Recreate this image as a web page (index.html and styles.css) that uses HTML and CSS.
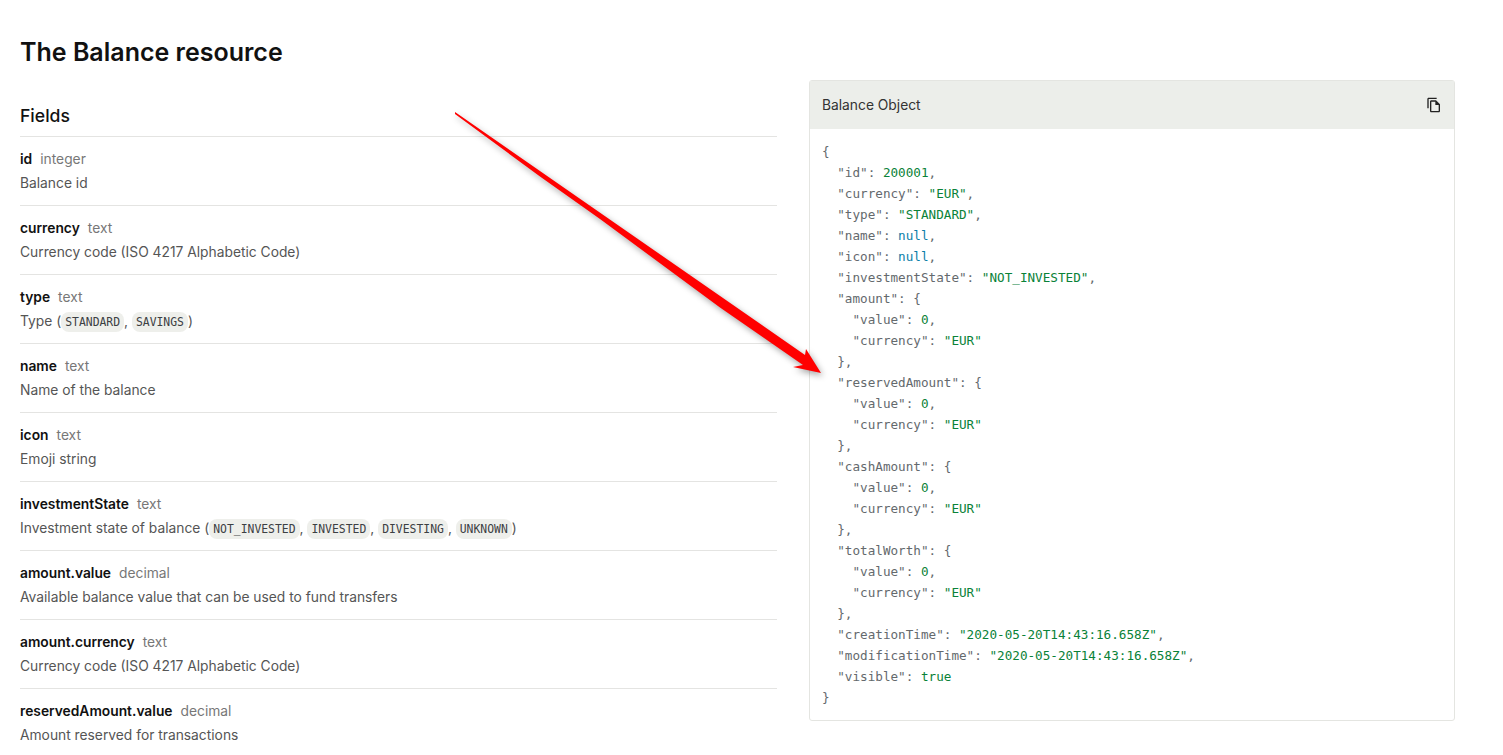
FILE: index.html
```html
<!DOCTYPE html>
<html lang="en">
<head>
    <meta charset="UTF-8">
    <meta name="viewport" content="width=device-width, initial-scale=1.0">
    <title>The Balance resource</title>
    <link rel="stylesheet" href="styles.css">
</head>
<body>
    <div class="page">
        <h1 class="page-title">The Balance resource</h1>
        <div class="columns">
            <div class="fields">
                <h2 class="fields-title">Fields</h2>
                <div class="field">
                    <p class="field-head"><strong>id</strong><span class="field-type">integer</span></p>
                    <p class="field-desc">Balance id</p>
                </div>
                <div class="field">
                    <p class="field-head"><strong>currency</strong><span class="field-type">text</span></p>
                    <p class="field-desc">Currency code (ISO 4217 Alphabetic Code)</p>
                </div>
                <div class="field">
                    <p class="field-head"><strong>type</strong><span class="field-type">text</span></p>
                    <p class="field-desc">Type (<code>STANDARD</code>, <code>SAVINGS</code>)</p>
                </div>
                <div class="field">
                    <p class="field-head"><strong>name</strong><span class="field-type">text</span></p>
                    <p class="field-desc">Name of the balance</p>
                </div>
                <div class="field">
                    <p class="field-head"><strong>icon</strong><span class="field-type">text</span></p>
                    <p class="field-desc">Emoji string</p>
                </div>
                <div class="field">
                    <p class="field-head"><strong>investmentState</strong><span class="field-type">text</span></p>
                    <p class="field-desc">Investment state of balance (<code>NOT_INVESTED</code>, <code>INVESTED</code>, <code>DIVESTING</code>, <code>UNKNOWN</code>)</p>
                </div>
                <div class="field">
                    <p class="field-head"><strong>amount.value</strong><span class="field-type">decimal</span></p>
                    <p class="field-desc">Available balance value that can be used to fund transfers</p>
                </div>
                <div class="field">
                    <p class="field-head"><strong>amount.currency</strong><span class="field-type">text</span></p>
                    <p class="field-desc">Currency code (ISO 4217 Alphabetic Code)</p>
                </div>
                <div class="field">
                    <p class="field-head"><strong>reservedAmount.value</strong><span class="field-type">decimal</span></p>
                    <p class="field-desc">Amount reserved for transactions</p>
                </div>
            </div>
            <div class="code-card">
                <div class="code-header">
                    <span>Balance Object</span>
                    <svg class="copy-icon" viewBox="0 0 24 24" width="16" height="16">
                        <path d="M16 1H4c-1.1 0-2 .9-2 2v14h2V3h12V1zm-1 4H8c-1.1 0-1.99.9-1.99 2L6 21c0 1.1.89 2 1.99 2H19c1.1 0 2-.9 2-2V11l-6-6zM8 21V7h6v5h5v9H8z"/>
                    </svg>
                </div>
<pre class="code-body">{
  "id": <span class="str">200001</span>,
  "currency": <span class="str">"EUR"</span>,
  "type": <span class="str">"STANDARD"</span>,
  "name": <span class="kw">null</span>,
  "icon": <span class="kw">null</span>,
  "investmentState": <span class="str">"NOT_INVESTED"</span>,
  "amount": {
    "value": <span class="str">0</span>,
    "currency": <span class="str">"EUR"</span>
  },
  "reservedAmount": {
    "value": <span class="str">0</span>,
    "currency": <span class="str">"EUR"</span>
  },
  "cashAmount": {
    "value": <span class="str">0</span>,
    "currency": <span class="str">"EUR"</span>
  },
  "totalWorth": {
    "value": <span class="str">0</span>,
    "currency": <span class="str">"EUR"</span>
  },
  "creationTime": <span class="str">"2020-05-20T14:43:16.658Z"</span>,
  "modificationTime": <span class="str">"2020-05-20T14:43:16.658Z"</span>,
  "visible": <span class="str">true</span>
}</pre>
            </div>
        </div>
    </div>
    <svg class="arrow" viewBox="0 0 1503 755" width="1503" height="755">
        <polygon points="455,112 805,355 806,349 821,373 793,367 803,365 720,307.5 600,219 540,176.5 455,114"/>
    </svg>
</body>
</html>
```

FILE: styles.css
```css
* {
    margin: 0;
    padding: 0;
    box-sizing: border-box;
}
html, body {
    height: 755px;
    overflow: hidden;
}
body {
    background: #fff;
    color: #555;
    font-family: Inter, "Liberation Sans", sans-serif;
    font-size: 13.8px;
    line-height: 24px;
    position: relative;
}
.page {
    padding: 36px 48px 0 20px;
}
.page-title {
    color: #111;
    font-size: 25px;
    font-weight: 600;
    line-height: 32px;
}
.columns {
    display: flex;
    align-items: flex-start;
    gap: 32px;
    margin-top: 12px;
}
.fields {
    width: 757px;
    flex-shrink: 0;
}
.fields-title {
    color: #111;
    font-size: 17.6px;
    font-weight: 500;
    line-height: 24px;
    margin-top: 24px;
    padding-bottom: 8px;
}
.field {
    border-top: 1px solid #e4e4e2;
    height: 69px;
    padding-top: 10px;
}
.field-head strong {
    color: #111;
    font-weight: 600;
}
.field-type {
    color: #777;
    margin-left: 8px;
}
code {
    background: #eeefeb;
    border-radius: 8px;
    color: #3c4043;
    font-family: "DejaVu Sans Mono", monospace;
    font-size: 11.4px;
    padding: 3px 4px;
}
.code-card {
    border: 1px solid #e4e5e1;
    border-radius: 3px;
    width: 646px;
    flex-shrink: 0;
}
.code-header {
    background: #eceeea;
    color: #333;
    display: flex;
    justify-content: space-between;
    align-items: center;
    height: 48px;
    padding: 0 12px;
}
.copy-icon {
    fill: #222;
}
.code-body {
    color: #64696d;
    font-family: "DejaVu Sans Mono", monospace;
    font-size: 12.65px;
    line-height: 21px;
    padding: 12px;
}
.str {
    color: #0a8238;
}
.kw {
    color: #0b7ea8;
}
.arrow {
    position: absolute;
    top: 0;
    left: 0;
    pointer-events: none;
    filter: drop-shadow(2px 3px 3px rgba(0, 0, 0, 0.35));
}
.arrow polygon {
    fill: #f00;
}
```
